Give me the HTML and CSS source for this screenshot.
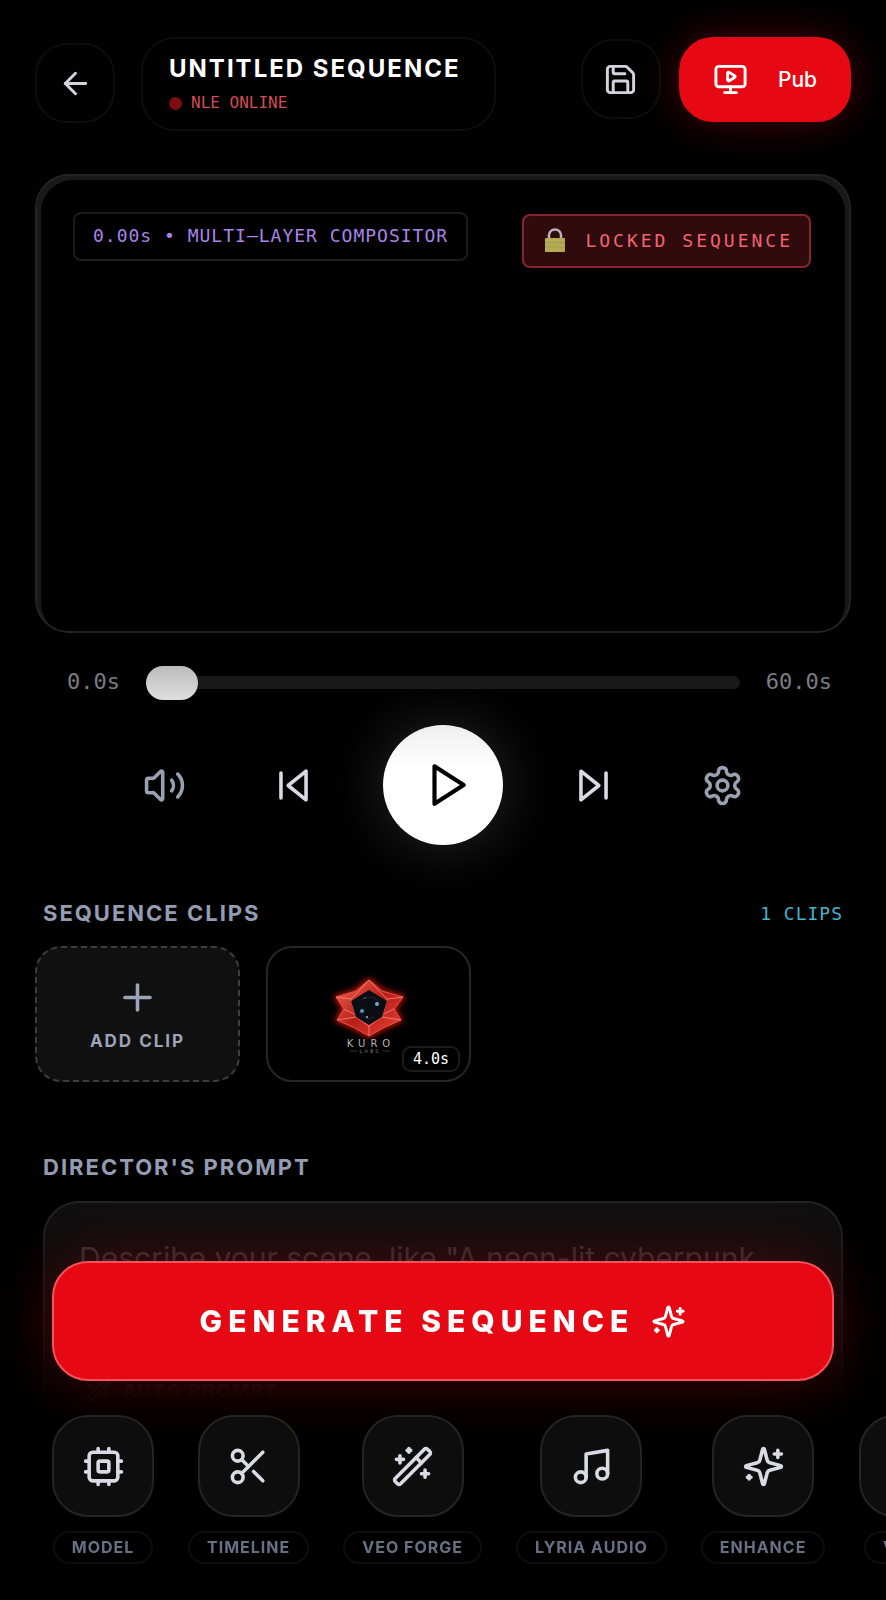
FILE: index.html
```html
<!DOCTYPE html>
<html lang="en">
<head>
  <meta charset="UTF-8" />
  <meta name="viewport" content="width=device-width, initial-scale=1" />
  <title>Untitled Sequence</title>
  <link rel="stylesheet" href="styles.css">
</head>
<body>
  <header class="topbar">
    <button class="icon-btn" aria-label="Back">
      <svg class="icon" viewBox="0 0 24 24"><path d="m12 19-7-7 7-7"/><path d="M19 12H5"/></svg>
    </button>
    <div class="title-pill">
      <h1>UNTITLED SEQUENCE</h1>
      <p class="status"><span class="dot"></span>NLE ONLINE</p>
    </div>
    <div class="actions">
      <button class="icon-btn" aria-label="Save">
        <svg class="icon" viewBox="0 0 24 24"><path d="M15.2 3a2 2 0 0 1 1.4.6l3.8 3.8a2 2 0 0 1 .6 1.4V19a2 2 0 0 1-2 2H5a2 2 0 0 1-2-2V5a2 2 0 0 1 2-2z"/><path d="M17 21v-7a1 1 0 0 0-1-1H8a1 1 0 0 0-1 1v7"/><path d="M7 3v4a1 1 0 0 0 1 1h7"/></svg>
      </button>
      <button class="publish-btn">
        <svg class="icon" viewBox="0 0 24 24"><path d="M10 7.75a.75.75 0 0 1 1.142-.638l3.664 2.249a.75.75 0 0 1 0 1.278l-3.664 2.25a.75.75 0 0 1-1.142-.64z"/><path d="M12 17v4"/><path d="M8 21h8"/><rect x="2" y="3" width="20" height="14" rx="2"/></svg>
        Pub
      </button>
    </div>
  </header>

  <main>
    <section class="preview">
      <span class="badge">0.00s • MULTI—LAYER COMPOSITOR</span>
      <span class="badge locked">
        <svg class="lock" viewBox="0 0 20 24"><path d="M4 12V7a6 5.6 0 0 1 12 0v5" fill="none" stroke="#b9b3bd" stroke-width="2.5"/><rect y="10" width="20" height="14" rx="1" fill="#b5ab55"/><path d="M0 14.5h20M0 19h20" stroke="#a59c4a"/></svg>
        LOCKED SEQUENCE
      </span>
    </section>

    <div class="scrubber">
      <label for="seek">0.0s</label>
      <input type="range" id="seek" min="0" max="60" value="0" step="0.1">
      <span>60.0s</span>
    </div>

    <div class="controls">
      <button class="muted" aria-label="Volume">
        <svg class="icon large" viewBox="0 0 24 24"><path d="M11 4.702a.705.705 0 0 0-1.203-.498L6.413 7.587A1.4 1.4 0 0 1 5.416 8H3a1 1 0 0 0-1 1v6a1 1 0 0 0 1 1h2.416a1.4 1.4 0 0 1 .997.413l3.383 3.384A.705.705 0 0 0 11 19.298z"/><path d="M16 9a5 5 0 0 1 0 6"/><path d="M19.364 18.364a9 9 0 0 0 0-12.728"/></svg>
      </button>
      <button aria-label="Previous">
        <svg class="icon large" viewBox="0 0 24 24"><path d="M19 20 9 12l10-8z"/><path d="M5 19V5"/></svg>
      </button>
      <button class="play" aria-label="Play">
        <svg class="icon" viewBox="0 0 24 24"><path d="m6 3 14 9-14 9z"/></svg>
      </button>
      <button aria-label="Next">
        <svg class="icon large" viewBox="0 0 24 24"><path d="m5 4 10 8-10 8z"/><path d="M19 5v14"/></svg>
      </button>
      <button class="muted" aria-label="Settings">
        <svg class="icon large" viewBox="0 0 24 24"><path d="M12.22 2h-.44a2 2 0 0 0-2 2v.18a2 2 0 0 1-1 1.73l-.43.25a2 2 0 0 1-2 0l-.15-.08a2 2 0 0 0-2.73.73l-.22.38a2 2 0 0 0 .73 2.73l.15.1a2 2 0 0 1 1 1.72v.51a2 2 0 0 1-1 1.74l-.15.09a2 2 0 0 0-.73 2.73l.22.38a2 2 0 0 0 2.73.73l.15-.08a2 2 0 0 1 2 0l.43.25a2 2 0 0 1 1 1.73V20a2 2 0 0 0 2 2h.44a2 2 0 0 0 2-2v-.18a2 2 0 0 1 1-1.73l.43-.25a2 2 0 0 1 2 0l.15.08a2 2 0 0 0 2.73-.73l.22-.39a2 2 0 0 0-.73-2.73l-.15-.08a2 2 0 0 1-1-1.74v-.5a2 2 0 0 1 1-1.74l.15-.09a2 2 0 0 0 .73-2.73l-.22-.38a2 2 0 0 0-2.73-.73l-.15.08a2 2 0 0 1-2 0l-.43-.25a2 2 0 0 1-1-1.73V4a2 2 0 0 0-2-2z"/><circle cx="12" cy="12" r="3"/></svg>
      </button>
    </div>

    <section>
      <div class="section-head">
        <h2>SEQUENCE CLIPS</h2>
        <span class="count">1 CLIPS</span>
      </div>
      <div class="clips">
        <button class="clip add">
          <svg class="icon large" viewBox="0 0 24 24"><path d="M5 12h14"/><path d="M12 5v14"/></svg>
          ADD CLIP
        </button>
        <div class="clip">
          <svg class="kuro" viewBox="0 0 100 90" role="img" aria-label="Kuro Labs">
            <defs>
              <linearGradient id="gem" x1="0" y1="0" x2="1" y2="1">
                <stop offset="0" stop-color="#f4644e"/>
                <stop offset="0.5" stop-color="#b81f1a"/>
                <stop offset="1" stop-color="#ea4334"/>
              </linearGradient>
              <filter id="glow" x="-30%" y="-30%" width="160%" height="160%"><feGaussianBlur stdDeviation="3"/></filter>
            </defs>
            <path d="M50 6 63 17 84 23 75 35 82 46 64 54 50 62 36 54 18 46 25 35 17 23 37 17z" fill="#c81410" stroke="#e01b12" stroke-width="3" filter="url(#glow)"/>
            <path d="M50 6 63 17 84 23 75 35 82 46 64 54 50 62 36 54 18 46 25 35 17 23 37 17z" fill="url(#gem)" stroke="#e8503f"/>
            <path d="M50 6 40 17 32 25 17 23M50 6l10 11 8 8 16-2M32 25l5 18 13 9 13-9 5-18M37 43l-19 3M63 43l19 3M50 52v10M25 35l10 5M75 35l-10 5" fill="none" stroke="#ff9480" stroke-opacity="0.7"/>
            <path d="M50 16 68 27 63 43 50 51 37 43 32 27z" fill="#0a0d14"/>
            <path d="M40 28c4-6 15-7 20 0M40 38c4 6 10 8 15 5" fill="none" stroke="#3a1a2c"/>
            <circle cx="58" cy="30" r="2" fill="#5fb4cc"/>
            <circle cx="43" cy="37" r="2" fill="#4a9db8"/>
            <circle cx="48" cy="43" r="1" fill="#70c9dc"/>
            <circle cx="46" cy="24" r="1" fill="#315c70"/>
            <text class="kuro-name" x="52" y="73">KURO</text>
            <text class="kuro-sub" x="51" y="79">LABS</text>
            <path d="M31 77h7M64 77h7" stroke="#333"/>
          </svg>
          <span class="duration">4.0s</span>
        </div>
      </div>
    </section>

    <section class="director">
      <h2><label for="prompt">DIRECTOR'S PROMPT</label></h2>
      <div class="prompt-box">
        <textarea id="prompt" rows="3" placeholder='Describe your scene, like "A neon-lit cyberpunk city in the rain"'></textarea>
        <button class="auto">
          <svg class="icon" viewBox="0 0 24 24"><use href="#wand"/></svg>
          AUTO PROMPT
        </button>
      </div>
    </section>
  </main>

  <footer class="dock">
    <button class="generate">
      GENERATE SEQUENCE
      <svg class="icon" viewBox="0 0 24 24"><use href="#sparkles"/></svg>
    </button>
    <nav class="tools">
      <button class="tool">
        <span class="tile"><svg class="icon large" viewBox="0 0 24 24"><rect x="4" y="4" width="16" height="16" rx="2"/><rect x="9" y="9" width="6" height="6" rx="1"/><path d="M15 2v2M15 20v2M2 15h2M2 9h2M20 15h2M20 9h2M9 2v2M9 20v2"/></svg></span>
        <span class="tag">MODEL</span>
      </button>
      <button class="tool">
        <span class="tile"><svg class="icon large" viewBox="0 0 24 24"><circle cx="6" cy="6" r="3"/><path d="M8.12 8.12 12 12"/><path d="M20 4 8.12 15.88"/><circle cx="6" cy="18" r="3"/><path d="M14.8 14.8 20 20"/></svg></span>
        <span class="tag">TIMELINE</span>
      </button>
      <button class="tool">
        <span class="tile"><svg class="icon large" viewBox="0 0 24 24"><g id="wand"><path d="m21.64 3.64-1.28-1.28a1.21 1.21 0 0 0-1.72 0L2.36 18.64a1.21 1.21 0 0 0 0 1.72l1.28 1.28a1.2 1.2 0 0 0 1.72 0L21.64 5.36a1.2 1.2 0 0 0 0-1.72"/><path d="m14 7 3 3M5 6v4M19 14v4M10 2v2M7 8H3M21 16h-4M11 3H9"/></g></svg></span>
        <span class="tag">VEO FORGE</span>
      </button>
      <button class="tool">
        <span class="tile"><svg class="icon large" viewBox="0 0 24 24"><path d="M9 18V5l12-2v13"/><circle cx="6" cy="18" r="3"/><circle cx="18" cy="16" r="3"/></svg></span>
        <span class="tag">LYRIA AUDIO</span>
      </button>
      <button class="tool">
        <span class="tile"><svg class="icon large" viewBox="0 0 24 24"><g id="sparkles"><path d="M9.937 15.5A2 2 0 0 0 8.5 14.063l-6.135-1.582a.5.5 0 0 1 0-.962L8.5 9.936A2 2 0 0 0 9.937 8.5l1.582-6.135a.5.5 0 0 1 .963 0L14.063 8.5A2 2 0 0 0 15.5 9.937l6.135 1.581a.5.5 0 0 1 0 .964L15.5 14.063a2 2 0 0 0-1.437 1.437l-1.582 6.135a.5.5 0 0 1-.963 0z"/><path d="M20 3v4M22 5h-4M4 17v2M5 18H3"/></g></svg></span>
        <span class="tag">ENHANCE</span>
      </button>
      <button class="tool">
        <span class="tile"></span>
        <span class="tag">VOICE</span>
      </button>
    </nav>
  </footer>
</body>
</html>
```
FILE: styles.css
```css
* {
  box-sizing: border-box;
}

body {
  margin: 0;
  height: 100vh;
  overflow: hidden;
  background: #010102;
  color: #fff;
  font-family: Inter, "Liberation Sans", sans-serif;
}

h1, h2, p {
  margin: 0;
}

button {
  padding: 0;
  border: none;
  background: none;
  color: inherit;
  font-family: inherit;
  cursor: pointer;
}

.icon {
  width: 35px;
  height: 35px;
  flex-shrink: 0;
  fill: none;
  stroke: currentColor;
  stroke-width: 2;
  stroke-linecap: round;
  stroke-linejoin: round;
}

.icon.large {
  width: 43px;
  height: 43px;
}

/* top bar */
.topbar {
  display: flex;
  align-items: flex-start;
  padding: 37px 35px 0;
}

.icon-btn {
  display: flex;
  align-items: center;
  justify-content: center;
  width: 80px;
  height: 80px;
  border: 2px solid #0d0d0e;
  border-radius: 32px;
  color: #d4d4e0;
}

.topbar > .icon-btn {
  margin-top: 6px;
}

.title-pill {
  margin-left: 26px;
  padding: 16px 33px 14px 26px;
  border: 2px solid #0d0d0e;
  border-radius: 34px;
}

.title-pill h1 {
  font-size: 24px;
  line-height: 28px;
  font-weight: 700;
  letter-spacing: 2px;
}

.status {
  display: flex;
  align-items: center;
  gap: 9px;
  margin-top: 8px;
  color: #d64a54;
  font: 16px/24px "DejaVu Sans Mono", monospace;
}

.dot {
  width: 13px;
  height: 13px;
  border-radius: 50%;
  background: #7f0d12;
}

.actions {
  display: flex;
  align-items: flex-start;
  gap: 18px;
  margin-left: auto;
}

.actions .icon-btn {
  margin-top: 2px;
}

.publish-btn {
  display: flex;
  align-items: center;
  gap: 30px;
  height: 85px;
  padding: 0 34px;
  border-radius: 34px;
  background: #e60914;
  box-shadow: 0 0 40px rgba(230, 9, 20, 0.3);
  font-size: 21px;
  font-weight: 500;
}

/* preview */
.preview {
  display: flex;
  align-items: flex-start;
  justify-content: space-between;
  aspect-ratio: 816 / 459;
  margin: 43px 35px 0;
  padding: 36px 38px 0 36px;
  border: 2px solid #242424;
  border-radius: 34px;
  background: #000;
  box-shadow: inset 4px 4px 0 #191919, inset -4px 4px 0 #191919;
}

.badge {
  display: flex;
  align-items: center;
  height: 49px;
  padding: 0 18px 2px;
  border: 2px solid #1c1c1c;
  border-radius: 8px;
  color: #a884e8;
  font: 18px "DejaVu Sans Mono", monospace;
  letter-spacing: 1px;
  white-space: nowrap;
}

.badge.locked {
  gap: 20px;
  height: 54px;
  margin-top: 2px;
  padding: 0 16px 2px 21px;
  border-color: #86262c;
  background: #300b0d;
  color: #f06474;
  letter-spacing: 3px;
}

.lock {
  width: 20px;
  height: 24px;
}

/* scrubber */
.scrubber {
  display: flex;
  align-items: center;
  gap: 26px;
  margin: 32px 54px 0 67px;
  color: #7c7c84;
  font: 22px/34px "DejaVu Sans Mono", monospace;
}

.scrubber input {
  flex: 1;
  min-width: 0;
  height: 34px;
  margin: 0;
  background: none;
  appearance: none;
}

.scrubber input::-webkit-slider-runnable-track {
  height: 13px;
  border-radius: 7px;
  background: #191919;
}

.scrubber input::-webkit-slider-thumb {
  appearance: none;
  width: 52px;
  height: 34px;
  margin-top: -10px;
  border-radius: 17px;
  background: linear-gradient(#bcbcbc, #dedede);
}

/* transport */
.controls {
  display: flex;
  align-items: center;
  justify-content: center;
  gap: 51px;
  margin-top: 26px;
}

.controls button {
  display: flex;
  align-items: center;
  justify-content: center;
  width: 78px;
  height: 78px;
  color: #d8dae4;
}

.controls .muted {
  color: #99a0b2;
}

.controls .play {
  width: 120px;
  height: 120px;
  padding-left: 8px;
  border-radius: 50%;
  background: linear-gradient(#eee, #fff 35%);
  box-shadow: 0 0 60px rgba(255, 255, 255, 0.16);
  color: #000;
}

.play .icon {
  width: 50px;
  height: 50px;
}

/* clips */
h2 {
  color: #949cb2;
  font-size: 22px;
  line-height: 28px;
  font-weight: 700;
  letter-spacing: 2px;
}

.section-head {
  display: flex;
  align-items: center;
  justify-content: space-between;
  margin: 54px 43px 0;
}

.count {
  color: #45b4cb;
  font: 18px "DejaVu Sans Mono", monospace;
  letter-spacing: 1px;
}

.clips {
  display: flex;
  gap: 26px;
  margin: 19px 35px 0;
}

.clip {
  position: relative;
  display: flex;
  justify-content: center;
  width: 205px;
  height: 136px;
  border: 2px solid #262626;
  border-radius: 26px;
  background: #000;
}

.clip.add {
  flex-direction: column;
  align-items: center;
  gap: 11px;
  border: 2px dashed #3e3e40;
  background: #101011;
  color: #9ca4b8;
  font-size: 17px;
  line-height: 22px;
  font-weight: 700;
  letter-spacing: 2px;
}

.kuro {
  width: 100px;
  height: 90px;
  margin-top: 26px;
}

.kuro text {
  fill: #b5b5b5;
  font-family: "DejaVu Sans", sans-serif;
  text-anchor: middle;
}

.kuro-name {
  font-size: 10px;
  letter-spacing: 5px;
}

.kuro .kuro-sub {
  fill: #777;
  font-size: 5px;
  letter-spacing: 2px;
}

.duration {
  position: absolute;
  right: 9px;
  bottom: 8px;
  padding: 0 9px;
  border: 2px solid #1b1b1b;
  border-radius: 9px;
  background: #000;
  font: 15px/22px "DejaVu Sans Mono", monospace;
}

/* prompt */
.director {
  margin: 71px 43px 0;
}

.prompt-box {
  margin-top: 20px;
  padding: 36px 60px 36px 34px;
  border: 2px solid #242424;
  border-radius: 36px;
  background: #101011;
}

.prompt-box textarea {
  display: block;
  width: 100%;
  padding: 0;
  border: none;
  outline: none;
  resize: none;
  background: none;
  color: #fff;
  font: 400 30px/38px Inter, sans-serif;
}

.prompt-box textarea::placeholder {
  color: #463c45;
}

.auto {
  display: flex;
  align-items: center;
  gap: 12px;
  margin-top: 24px;
  margin-left: 6px;
  color: #5a5a64;
  font-size: 18px;
  font-weight: 700;
  letter-spacing: 2px;
}

.auto .icon {
  width: 26px;
  height: 26px;
}

/* bottom dock lies over the page */
.dock {
  position: fixed;
  left: 0;
  right: 0;
  bottom: 0;
  padding: 60px 0 36px;
  background: linear-gradient(transparent, rgba(0, 0, 0, 0.95) 48%, #000 60%);
}

.generate {
  display: flex;
  align-items: center;
  justify-content: center;
  gap: 17px;
  width: calc(100% - 104px);
  height: 120px;
  margin: 0 52px;
  border: 2px solid #f4525b;
  border-radius: 36px;
  background: #e60914;
  box-shadow: 0 0 60px rgba(230, 9, 20, 0.3);
  font-size: 30px;
  font-weight: 800;
  letter-spacing: 6px;
}

.tools {
  display: flex;
  gap: 34px;
  margin-top: 34px;
  padding: 0 52px;
  overflow: hidden;
}

.tool {
  display: flex;
  flex-direction: column;
  align-items: center;
  flex-shrink: 0;
  gap: 14px;
}

.tile {
  display: flex;
  align-items: center;
  justify-content: center;
  width: 102px;
  height: 102px;
  border: 2px solid #242424;
  border-radius: 36px;
  background: #0d0d0e;
  color: #d8dae4;
}

.tag {
  padding: 0 17px;
  border: 2px solid #0d0d0e;
  border-radius: 17px;
  color: #687084;
  font-size: 16px;
  line-height: 29px;
  font-weight: 700;
  letter-spacing: 1px;
}
```
